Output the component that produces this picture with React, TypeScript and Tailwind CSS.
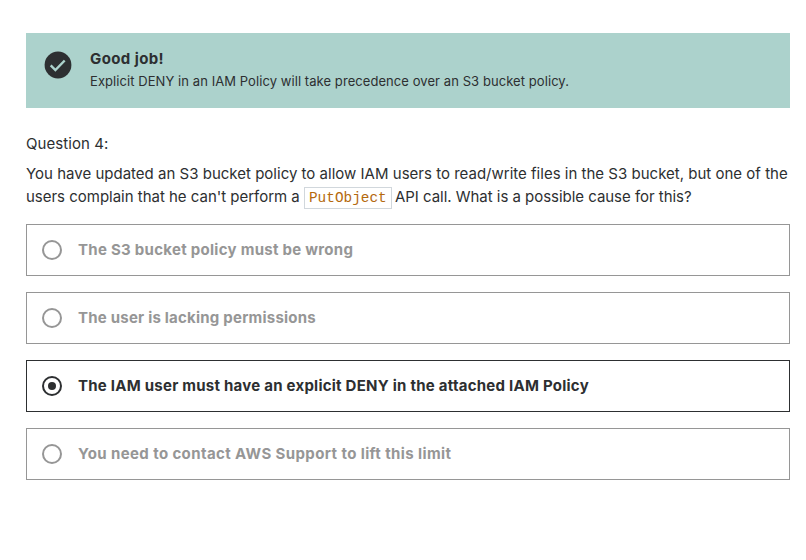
import React from 'react';

const answers = [
  { text: 'The S3 bucket policy must be wrong', tracking: 'tracking-[0.28px]' },
  { text: 'The user is lacking permissions', tracking: 'tracking-[0.22px]' },
  { text: 'The IAM user must have an explicit DENY in the attached IAM Policy', tracking: 'tracking-[0.245px]' },
  { text: 'You need to contact AWS Support to lift this limit', tracking: 'tracking-[0.39px]' },
];

const selected = 2;

export default function App() {
  return (
    <main className="h-[560px] w-[806px] bg-white pt-[33px] pr-4 pl-[26px] font-[Inter,sans-serif] text-[#2d2f31]">
      <section className="flex h-[75px] bg-[#acd2cc] pt-[15px] pl-[18px]">
        <svg className="mt-[3px] mr-[18px] h-7 w-7 shrink-0" viewBox="0 0 28 28">
          <circle cx="14" cy="14" r="13.4" fill="#2d2f31" />
          <path d="M6.7 14.3l4.7 4.7 9.3-9.5" fill="none" stroke="#acd2cc" strokeWidth="2.4" />
        </svg>
        <div>
          <h1 className="text-[15px] leading-[22px] font-bold tracking-[0.4px] whitespace-nowrap">Good job!</h1>
          <p className="text-[13px] leading-[22px] tracking-[0.07px] whitespace-nowrap">Explicit DENY in an IAM Policy will take precedence over an S3 bucket policy.</p>
        </div>
      </section>
      <p className="mt-6 text-[15px] leading-6 tracking-[0.08px]">Question 4:</p>
      <div className="mt-[6px] text-[15px] leading-[23px] whitespace-nowrap">
        <p className="h-[23px] tracking-[0.01px]">You have updated an S3 bucket policy to allow IAM users to read/write files in the S3 bucket, but one of the</p>
        <p className="h-[23px]">
          <span className="tracking-[-0.015px]">users complain that he can't perform a </span>
          <code className="border border-[#d1d7dc] px-1 py-[2px] font-['Liberation_Mono',monospace] text-[14.4px] leading-none text-[#b4690e]">PutObject</code>
          <span className="-ml-px tracking-[-0.03px]"> API call. What is a possible cause for this?</span>
        </p>
      </div>
      <div className="mt-4 flex flex-col gap-4">
        {answers.map(({ text, tracking }, i) => (
          <label key={text} className={`flex h-[52px] items-center border pl-[15px] ${i === selected ? 'border-[#2d2f31] text-[#2d2f31]' : 'border-[#969696] text-[#969696]'}`}>
            <svg className="mr-4 h-5 w-5" viewBox="0 0 20 20">
              <circle cx="10" cy="10" r="9" fill="none" stroke="currentColor" strokeWidth="2" />
              {i === selected && <circle cx="10" cy="10" r="4" fill="currentColor" />}
            </svg>
            <span className={`text-[15px] font-bold whitespace-nowrap ${tracking}`}>{text}</span>
          </label>
        ))}
      </div>
    </main>
  );
}
